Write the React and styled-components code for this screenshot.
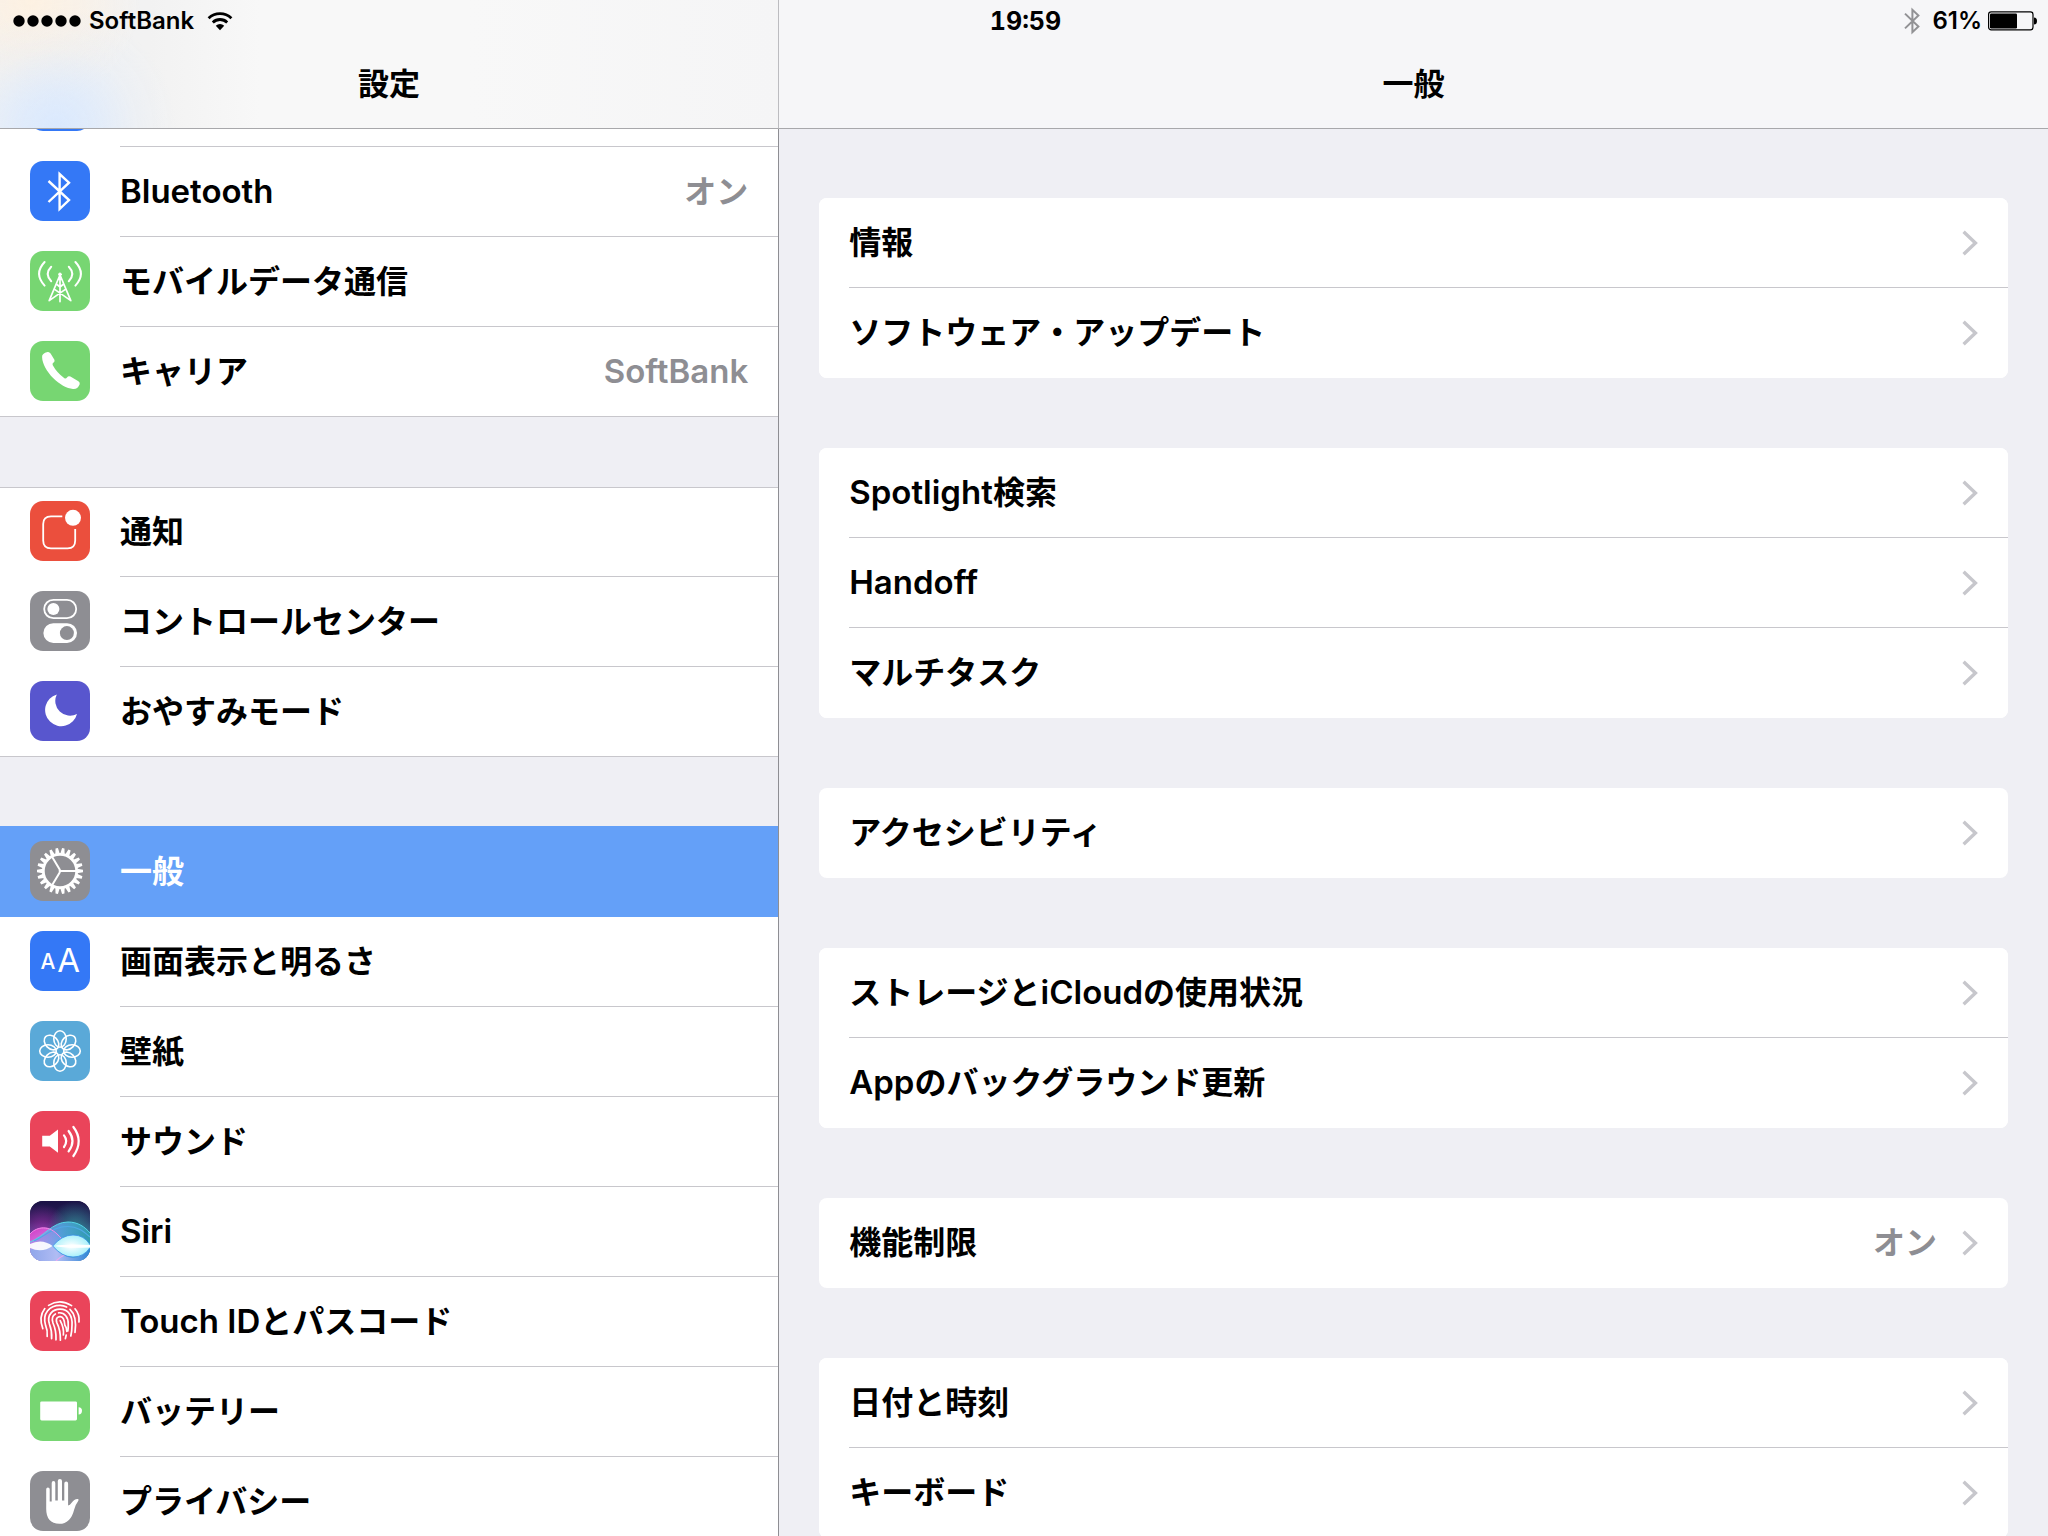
import React, { useRef, useState, useLayoutEffect } from 'react';
import styled, { createGlobalStyle } from 'styled-components'


//Data for the left list

const sidebarGroups = [
  [
    { id: 'wifi', icon: 'wifi', hiddenName: 'Wi-Fi' },
    { id: 'bluetooth', icon: 'bluetooth', name: 'Bluetooth', value: 'オン' },
    { id: 'cellular', icon: 'antenna', name: 'モバイルデータ通信' },
    { id: 'carrier', icon: 'phone', name: 'キャリア', value: 'SoftBank' },
  ],
  [
    { id: 'notifications', icon: 'notification', name: '通知' },
    { id: 'control', icon: 'control', name: 'コントロールセンター' },
    { id: 'dnd', icon: 'moon', name: 'おやすみモード' },
  ],
  [
    { id: 'general', icon: 'gear', name: '一般' },
    { id: 'display', icon: 'display', name: '画面表示と明るさ' },
    { id: 'wallpaper', icon: 'flower', name: '壁紙' },
    { id: 'sound', icon: 'sound', name: 'サウンド' },
    { id: 'siri', icon: 'siri', name: 'Siri' },
    { id: 'touchid', icon: 'fingerprint', name: 'Touch IDとパスコード' },
    { id: 'battery', icon: 'battery', name: 'バッテリー' },
    { id: 'privacy', icon: 'hand', name: 'プライバシー' },
  ],
]

//Data for the cards on the right

const detailGroups = [
  [{ name: '情報' }, { name: 'ソフトウェア・アップデート' }],
  [{ name: 'Spotlight検索' }, { name: 'Handoff' }, { name: 'マルチタスク' }],
  [{ name: 'アクセシビリティ' }],
  [{ name: 'ストレージとiCloudの使用状況' }, { name: 'Appのバックグラウンド更新' }],
  [{ name: '機能制限', value: 'オン' }],
  [{ name: '日付と時刻' }, { name: 'キーボード' }],
]

const tileColors = {
  wifi: '#3478f6',
  bluetooth: '#3478f6',
  antenna: '#77d672',
  phone: '#77d672',
  notification: '#eb4f3d',
  control: '#8e8e93',
  moon: '#5856ce',
  gear: '#8e8e93',
  display: '#3478f6',
  flower: '#5aa9d8',
  sound: '#ea445a',
  siri: '#1b1440',
  fingerprint: '#ea445a',
  battery: '#77d672',
  hand: '#8e8e93',
}

const turns = (count) => Array.from({ length: count }, (_, i) => (i * 360) / count)


//Icon drawings, all on a 60 x 60 tile

const line = { fill: 'none', stroke: '#fff', strokeLinecap: 'round', strokeLinejoin: 'round' }

const drawings = {
  wifi: (
    <g {...line} strokeWidth="4">
      <path d="M14 25a23 23 0 0 1 32 0M20 32a15 15 0 0 1 20 0M26 39a7 7 0 0 1 8 0" />
    </g>
  ),
  bluetooth: (
    <path {...line} strokeLinejoin="miter" strokeLinecap="butt" strokeWidth="2.4" d="M18.5 20L39 39L29.6 48V13L39 21.7L18.5 41" />
  ),
  antenna: (
    <g {...line} strokeWidth="2">
      <path d="M14.6 11Q3.6 22.6 14.6 34.6M21.2 15.8Q14.2 23 21.2 30.2" />
      <path d="M45.4 11Q56.4 22.6 45.4 34.6M38.8 15.8Q45.8 23 38.8 30.2" />
      <path strokeWidth="1.7" d="M30 24L19.2 49.6L35 38.6M30 24L40.8 49.6L25 38.6M30 24V50.6M27 33.5L30 36L33 33.5" />
      <circle cx="30" cy="23.4" r="1.4" fill="#fff" strokeWidth="1" />
    </g>
  ),
  phone: (
    <path
      fill="#fff"
      d="M12.1 16Q11.8 12.6 17.6 11.1Q19.4 10.8 20.6 12.6L24.4 18.8Q25.2 20.4 23.6 21.6Q21.8 22.6 22.8 24.2Q26.6 31.4 34.4 37.2Q36 38 37 36.4Q38.4 34.6 40.4 35.6L48.4 40.2Q50.4 41.6 49.6 43.4Q47.4 48.4 43 47.9C31 47.4 12.4 30 12.1 16z"
    />
  ),
  notification: (
    <g>
      <path {...line} strokeLinecap="butt" strokeWidth="1.8" d="M32.3 15.4H21Q13.2 15.4 13.2 23V39.6Q13.2 47.4 21 47.4H37.6Q45.2 47.4 45.2 39.6V28" />
      <circle cx="43" cy="16.8" r="8" fill="#fff" />
    </g>
  ),
  control: (
    <g>
      <rect x="14.2" y="8.8" width="32" height="18.4" rx="9.2" fill="none" stroke="#fff" strokeWidth="1.8" />
      <circle cx="23.4" cy="18" r="6" fill="#fff" />
      <rect x="13.4" y="32.2" width="33.6" height="19.8" rx="9.9" fill="#fff" />
      <circle cx="36.9" cy="42.1" r="7" fill="#8e8e93" />
    </g>
  ),
  moon: <path fill="#fff" d="M26.8 13.4A16.2 16.2 0 1 0 47 33A14.8 14.8 0 0 1 26.8 13.4z" />,
  gear: (
    <g>
      <circle cx="30" cy="30" r="16.7" fill="none" stroke="#fff" strokeWidth="2.8" />
      {turns(22).map((deg) => (
        <path key={deg} fill="#fff" transform={`rotate(${deg} 30 30)`} d="M47.2 27.8L53 28.8V31.2L47.2 32.2z" />
      ))}
      <path stroke="#fff" strokeWidth="2" fill="none" d="M31 30H47M30 29L21.6 15M30 31L21.6 45" />
      <circle cx="30" cy="30" r="1.4" fill="#fff" />
    </g>
  ),
  display: (
    <g fill="#fff" fontFamily="Inter, sans-serif" textAnchor="middle">
      <text x="18" y="38" fontSize="21" fontWeight="500">A</text>
      <text x="38.6" y="41.2" fontSize="33" fontWeight="400">A</text>
    </g>
  ),
  flower: (
    <g {...line} strokeWidth="1.6">
      {turns(8).map((deg) => (
        <ellipse key={deg} transform={`rotate(${deg} 30 30)`} cx="30" cy="18" rx="6.2" ry="8.3" />
      ))}
    </g>
  ),
  sound: (
    <g>
      <path fill="#fff" d="M12.2 24.8H19.8L28 18.6V41.8L19.8 35.4H12.2z" />
      <path {...line} strokeWidth="2.2" d="M34 24.4Q38.4 30 34 36M38.6 20Q46.4 30 38.6 40.4M43.4 16Q54 30 43.4 45" />
    </g>
  ),
  siri: (
    <g>
      <rect width="60" height="60" fill="url(#siriSky)" />
      <rect width="60" height="60" fill="url(#siriGlowLeft)" />
      <rect width="60" height="60" fill="url(#siriGlowRight)" />
      <path d="M0 33C6 26 18 23 28 33C34 39 42 50 60 58V60H0z" fill="url(#siriPink)" />
      <path d="M0 41C14 36 22 21 38 21C48 21 55 26 60 32V60H0z" fill="url(#siriCyan)" />
      <path d="M0 41C14 36 22 21 38 21C48 21 55 26 60 32" fill="none" stroke="#55d6e8" strokeWidth="1" />
      <path d="M4 40C18 33 24 25.5 38 25.5C48 25.5 54 31 60 36" fill="none" stroke="#4fa8e6" strokeWidth="1.2" />
      <path d="M0 33C5 27 17 23 27 33C31 37 34 40 37 45" fill="none" stroke="#f08be8" strokeWidth="1" />
      <path d="M0 48Q12 50 22.7 45Q33 57 43 57Q54 56 60 47V60H0z" fill="url(#siriSea)" />
      <path d="M36 53Q30 56 26 60" fill="none" stroke="#e9a9ee" strokeWidth="1.2" />
      <path d="M22.7 45Q32 34 43 34Q54 34 60 43.5V46.5Q54 56 43 56Q32 56 22.7 45z" fill="url(#siriLens)" stroke="#3a8fe8" strokeWidth="0.8" />
      <path d="M0 43Q12 37 22.7 45Q12 52.4 0 47z" fill="#fff" fillOpacity="0.92" />
      <path d="M24 45Q36 42.6 60 44V46.4Q36 47.6 24 45z" fill="#fff" />
    </g>
  ),
  fingerprint: (
    <g {...line} strokeWidth="1.7">
      <path d="M18.6 14.4Q30 7.2 41.6 14.6M14.8 17.6Q8.4 26 12.8 37.6M45 17.8Q49.8 23.4 49 31" />
      <path d="M17.2 45.4Q17.8 39.4 15.6 34.4C11.8 22 20 14.4 30 14.4Q33.6 14.4 36.6 16M40 18.4C46.2 24 46 34 45 41.4" />
      <path d="M21.6 47.6Q22.2 40 19.4 33C16.4 23.6 23 18.2 30 18.2C38.4 18.2 42.6 25 42 34Q42 40 40.8 45" />
      <path d="M26 48.8Q26.4 39.8 23 32Q20.8 25.6 25.4 23M28.6 21.8C34.6 21.2 38.4 26.4 38.2 33Q38.4 36.4 37.8 40" />
      <path d="M30.4 49.2Q30.6 39 26.8 31.6C25.2 27 28.2 25.4 30.4 25.6C33.8 26 34.6 30.6 34.8 34Q37 37 36.8 40.4M36.2 44L35.4 47.6" />
      <path d="M30.2 29.6Q34.2 37 33.4 44" />
    </g>
  ),
  battery: (
    <g fill="#fff">
      <rect x="10.2" y="20.4" width="36.8" height="19" rx="1.4" />
      <path d="M48.6 26.2Q52 26.2 52 29.8Q52 33.4 48.6 33.4z" />
    </g>
  ),
  hand: (
    <path
      fill="#fff"
      d="M16.2 18.2Q16.2 16.6 17.9 16.6Q19.7 16.6 19.7 18.2V30.6H21.7V12Q21.7 10 23.5 10Q25.3 10 25.3 12V29.6H27.8V10Q27.8 8 29.9 8Q32 8 32 10V29.6H34.3V12.4Q34.3 10.6 36.2 10.6Q38.1 10.6 38.1 12.4V34.6Q40 34.2 41.6 31.8Q44.4 27.6 48 28Q49.2 28.4 48.2 30Q45.6 33.4 44.2 38.4Q40.6 52.8 29.4 52.8Q16.2 52.4 16.2 38z"
    />
  ),
}

const AppIcon = ({ kind }) => (
  <Tile viewBox="0 0 60 60" aria-hidden="true">
    {kind === 'siri' && (
      <defs>
        <linearGradient id="siriSky" x1="0" y1="0" x2="0" y2="1">
          <stop offset="0" stopColor="#1a1145" />
          <stop offset="0.35" stopColor="#2c235c" />
          <stop offset="0.6" stopColor="#3a6c9e" />
          <stop offset="1" stopColor="#9fb4ee" />
        </linearGradient>
        <radialGradient id="siriGlowLeft" cx="0.2" cy="0.5" r="0.45">
          <stop offset="0" stopColor="#a02aa8" stopOpacity="0.8" />
          <stop offset="1" stopColor="#a02aa8" stopOpacity="0" />
        </radialGradient>
        <radialGradient id="siriGlowRight" cx="0.75" cy="0.45" r="0.45">
          <stop offset="0" stopColor="#2f8a94" stopOpacity="0.9" />
          <stop offset="1" stopColor="#2f8a94" stopOpacity="0" />
        </radialGradient>
        <linearGradient id="siriPink" x1="0" y1="0" x2="1" y2="1">
          <stop offset="0" stopColor="#d636c4" />
          <stop offset="0.5" stopColor="#c69bee" />
          <stop offset="1" stopColor="#b69cf0" />
        </linearGradient>
        <linearGradient id="siriCyan" x1="0" y1="0" x2="1" y2="0">
          <stop offset="0" stopColor="#a098f0" stopOpacity="0.5" />
          <stop offset="0.5" stopColor="#57a6e4" stopOpacity="0.85" />
          <stop offset="1" stopColor="#2fa0b0" stopOpacity="0.9" />
        </linearGradient>
        <linearGradient id="siriSea" x1="0" y1="0" x2="1" y2="0">
          <stop offset="0" stopColor="#8fa6ea" />
          <stop offset="0.45" stopColor="#b0bcf4" />
          <stop offset="1" stopColor="#2f86d6" />
        </linearGradient>
        <radialGradient id="siriLens">
          <stop offset="0" stopColor="#fff" />
          <stop offset="1" stopColor="#a8f0fa" />
        </radialGradient>
        <clipPath id="siriTile">
          <rect width="60" height="60" rx="13" />
        </clipPath>
      </defs>
    )}
    <rect width="60" height="60" rx="13" fill={tileColors[kind]} />
    <g clipPath={kind === 'siri' ? 'url(#siriTile)' : undefined}>{drawings[kind]}</g>
  </Tile>
)

const Chevron = () => (
  <svg width="16" height="26" viewBox="0 0 16 26" aria-hidden="true">
    <path d="M1.6 1.8L13.4 13L1.6 24.2" fill="none" stroke="#c7c7cc" strokeWidth="3.4" />
  </svg>
)

//Latin words are set one size larger than the kana and kanji around them

const Label = ({ text = '' }) => (
  <span>
    {text.split(/([A-Za-z][A-Za-z ]*)/).filter(Boolean).map((part, index) => (
      /^[A-Za-z]/.test(part) ? <Latin key={index}>{part}</Latin> : part
    ))}
  </span>
)


//Status bar on top of both title bars

const StatusBar = () => (
  <Status>
    <StatusSide>
      <svg width="68" height="12" viewBox="0 0 68 12" aria-hidden="true">
        {[6, 20, 34, 48, 62].map((x) => <circle key={x} cx={x} cy="6" r="5.7" />)}
      </svg>
      <Carrier>SoftBank</Carrier>
      <svg width="26" height="20" viewBox="0 0 26 20" aria-hidden="true">
        <path d="M1.6 7.2A16.4 16.4 0 0 1 24.4 7.2" fill="none" stroke="#000" strokeWidth="2.8" />
        <path d="M5.8 11.4A10.4 10.4 0 0 1 20.2 11.4" fill="none" stroke="#000" strokeWidth="2.8" />
        <path d="M13 19.2L8.8 14.8A6 6 0 0 1 17.2 14.8z" />
      </svg>
    </StatusSide>
    <Clock>19:59</Clock>
    <StatusSide $end>
      <svg width="16" height="28" viewBox="0 0 16 28" aria-hidden="true">
        <path d="M1 6.6L14.4 19.6L8.4 25.2V2.8L14.4 8.4L1 21.4" fill="none" stroke="#929295" strokeWidth="2" />
      </svg>
      <Percent>61%</Percent>
      <svg width="50" height="20" viewBox="0 0 50 20" aria-hidden="true">
        <rect x="0.6" y="0.9" width="44.4" height="18" rx="2.6" fill="none" stroke="#000" strokeWidth="1.2" />
        <rect x="2" y="2.4" width="27" height="15" rx="1.2" />
        <path d="M46 6.4Q49 6.4 49 10Q49 13.6 46 13.6z" />
      </svg>
    </StatusSide>
  </Status>
)


const Sidebar = ({ selected, onSelect }) => {
  const ref = useRef(null);

  useLayoutEffect(() => {
    //start with the Wi-Fi row already scrolled under the title bar
    ref.current.scrollTop = 72;
  }, []);

  return (
    <Pane>
      <SideHeader><Title>設定</Title></SideHeader>
      <Scroll ref={ref}>
        {sidebarGroups.map((group, index) => (
          <SideGroup key={index}>
            {group.map((item) => (
              <SideRow
                key={item.id}
                type="button"
                aria-label={item.hiddenName}
                $selected={item.id === selected}
                onClick={() => onSelect(item.id)}
              >
                <AppIcon kind={item.icon} />
                <SideRowBody>
                  <Label text={item.name} />
                  {item.value && <Value><Label text={item.value} /></Value>}
                </SideRowBody>
              </SideRow>
            ))}
          </SideGroup>
        ))}
      </Scroll>
    </Pane>
  );
}


const Detail = () => (
  <Pane>
    <DetailHeader><Title>一般</Title></DetailHeader>
    <DetailScroll>
      {detailGroups.map((group, index) => (
        <Card key={index}>
          {group.map((item) => (
            <CardRow key={item.name} type="button">
              <CardRowBody>
                <Label text={item.name} />
                <Accessory>
                  {item.value && <Value><Label text={item.value} /></Value>}
                  <Chevron />
                </Accessory>
              </CardRowBody>
            </CardRow>
          ))}
        </Card>
      ))}
    </DetailScroll>
  </Pane>
)


const App = () => {
  const [selected, setSelected] = useState('general');

  return (
    <>
      <GlobalStyle />
      <Screen>
        <Sidebar selected={selected} onSelect={setSelected} />
        <Detail />
        <StatusBar />
      </Screen>
    </>
  );
}




//styling

const GlobalStyle = createGlobalStyle`
* {
  box-sizing: border-box;
}
body {
  margin: 0;
  background: #efeff4;
  color: #000;
  font-family: Inter, "Noto Sans CJK JP", sans-serif;
}
button {
  font: inherit;
  color: inherit;
  border: 0;
  padding: 0;
  text-align: left;
  cursor: pointer;
}
`

const Screen = styled.div`
position: relative;
display: grid;
grid-template-columns: 38% 1fr;
height: 100vh;
overflow: hidden;
`

const Status = styled.div`
position: absolute;
top: 0;
left: 0;
right: 0;
display: grid;
grid-template-columns: 1fr auto 1fr;
align-items: center;
height: 42px;
padding: 0 10px 0 13px;
font-size: 24px;
line-height: 42px;
`

const StatusSide = styled.div`
display: flex;
align-items: center;
justify-content: ${(props) => (props.$end ? 'flex-end' : 'flex-start')};
`

const Carrier = styled.span`
margin: 0 13px 0 8px;
font-weight: 600;
`

const Percent = styled.span`
margin: 0 6px 0 12px;
font-weight: 600;
`

const Clock = styled.time`
font-size: 25px;
font-weight: 700;
font-variant-numeric: tabular-nums;
`

const Pane = styled.section`
display: flex;
flex-direction: column;
min-width: 0;
min-height: 0;
background: #efeff4;
`

const Header = styled.header`
flex: none;
display: flex;
align-items: flex-end;
justify-content: center;
height: 129px;
padding-bottom: 20px;
border-bottom: 1px solid #a8a8ab;
`

const SideHeader = styled(Header)`
background:
  radial-gradient(circle at 56px 128px, #dae9fe 0, rgba(218, 233, 254, 0.7) 36px, rgba(218, 233, 254, 0.2) 80px, rgba(218, 233, 254, 0) 120px),
  radial-gradient(circle at 30px 0, #fdf1e2 0, rgba(253, 241, 226, 0.6) 50px, rgba(253, 241, 226, 0) 110px),
  linear-gradient(90deg, #f1f2f3 0, #f2f2f2 150px, #f8f8f8 260px, #f8f8f8 60%, #f5f5f6 100%);
`

const DetailHeader = styled(Header)`
background: #f6f6f8;
border-left: 1px solid #bcbcc0;
`

const Title = styled.h1`
margin: 0;
font-size: 31px;
line-height: 48px;
font-weight: 700;
`

const Scroll = styled.div`
flex: 1;
min-height: 0;
overflow-y: auto;
scrollbar-width: none;
font-size: 32px;
line-height: 48px;
font-weight: 600;
`

const DetailScroll = styled(Scroll)`
padding: 69px 40px;
border-left: 1px solid #8e8e93;
`

const Latin = styled.span`
font-size: 33px;
`

const SideRowBody = styled.span`
flex: 1;
display: flex;
align-items: center;
justify-content: space-between;
padding-right: 30px;
border-bottom: 1px solid #c8c7cc;
white-space: nowrap;
`

const SideRow = styled.button`
display: flex;
width: 100%;
height: 90px;
background: ${(props) => (props.$selected ? '#64a0f8' : '#fff')};
color: ${(props) => (props.$selected ? '#fff' : '#000')};

&:first-child {
  box-shadow: ${(props) => (props.$selected ? '0 -1px 0 #64a0f8' : 'inset 0 1px 0 #c8c7cc')};
}
&:last-child {
  border-bottom: 1px solid #c8c7cc;
}
&:last-child ${SideRowBody} {
  border-bottom: 0;
}
${SideRowBody} {
  ${(props) => props.$selected && 'border-color: transparent;'}
}
`

const SideGroup = styled.div`
& + & {
  margin-top: 70px;
}
`

const Tile = styled.svg`
flex: none;
width: 60px;
height: 60px;
margin: 14px 30px 0;
`

const Value = styled.span`
color: #8e8e93;
`

const Card = styled.div`
border-radius: 8px;
background: #fff;
overflow: hidden;

& + & {
  margin-top: 70px;
}
`

const CardRowBody = styled.span`
display: flex;
align-items: center;
justify-content: space-between;
height: 90px;
padding-right: 30px;
border-bottom: 1px solid #c8c7cc;
white-space: nowrap;
`

const CardRow = styled.button`
display: block;
width: 100%;
padding-left: 30px;
background: #fff;

&:last-child ${CardRowBody} {
  border-bottom-color: transparent;
}
`

const Accessory = styled.span`
display: flex;
align-items: center;
gap: 25px;
`



export default App
